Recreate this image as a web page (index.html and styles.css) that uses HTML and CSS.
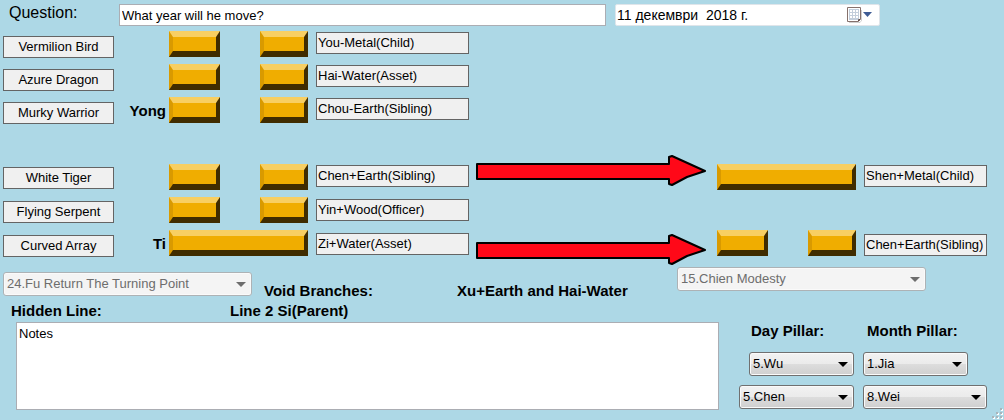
FILE: index.html
```html
<!DOCTYPE html>
<html lang="en">
<head>
<meta charset="utf-8">
<meta name="viewport" content="width=device-width, initial-scale=1">
<title>Hexagram Reading</title>
<link rel="stylesheet" href="styles.css">
</head>
<body>
<form class="window">
  <header class="header">
    <label class="question-label" for="question">Question:</label>
    <input class="question" id="question" type="text" value="What year will he move?">
    <div class="date">
      <input class="date-text" type="text" aria-label="Date" value="11 декември  2018 г.">
      <button class="date-button" type="button" aria-label="Open calendar">
        <svg width="26" height="18" viewBox="0 0 26 18" aria-hidden="true">
          <path d="M2 16.500h11l1.500-2V4" fill="none" stroke="#000" stroke-opacity=".18"/>
          <path d="M.5 1.500h13v12l-2 2H.5z" fill="#fff" stroke="#86716c"/>
          <path d="M2 3h10v10h-1v1H2z" fill="#c3cedb"/>
          <path d="M3 4h2v2H3zM6 4h2v2H6zM9 4h2v2H9zM3 7h2v2H3zM6 7h2v2H6zM9 7h2v2H9zM3 10h2v2H3zM6 10h2v2H6zM9 10h2v2H9z" fill="#fff"/>
          <path d="M11.500 15v-1.500H13" fill="none" stroke="#5f4c48"/>
          <path d="M16 6h9l-4.500 5z" fill="#3e5b94"/>
        </svg>
      </button>
    </div>
  </header>

  <main class="hexagrams">
    <div class="stack names">
      <span class="tag">Vermilion Bird</span>
      <span class="tag">Azure Dragon</span>
      <span class="tag">Murky Warrior</span>
    </div>
    <div class="stack roles">
      <strong></strong>
      <strong></strong>
      <strong>Yong</strong>
    </div>
    <div class="stack lines">
      <div class="line"><i class="bar"></i><i class="bar bar-short"></i></div>
      <div class="line"><i class="bar"></i><i class="bar bar-short"></i></div>
      <div class="line"><i class="bar"></i><i class="bar bar-short"></i></div>
    </div>
    <div class="stack branches">
      <span class="tag">You-Metal(Child)</span>
      <span class="tag">Hai-Water(Asset)</span>
      <span class="tag">Chou-Earth(Sibling)</span>
    </div>

    <div class="stack names lower">
      <span class="tag">White Tiger</span>
      <span class="tag">Flying Serpent</span>
      <span class="tag">Curved Array</span>
    </div>
    <div class="stack roles lower">
      <strong></strong>
      <strong></strong>
      <strong>Ti</strong>
    </div>
    <div class="stack lines lower">
      <div class="line"><i class="bar"></i><i class="bar bar-short"></i></div>
      <div class="line"><i class="bar"></i><i class="bar bar-short"></i></div>
      <div class="line"><i class="bar bar-full"></i></div>
    </div>
    <div class="stack branches lower">
      <span class="tag">Chen+Earth(Sibling)</span>
      <span class="tag">Yin+Wood(Officer)</span>
      <span class="tag">Zi+Water(Asset)</span>
    </div>
    <div class="arrows lower">
      <svg class="arrow" viewBox="0 0 230 31" preserveAspectRatio="none" role="img" aria-label="changes to">
        <path d="M1 9 193 9 193 2 196 1 229 16 211 22 196 30 193 29 193 24 1 24z" class="arrow-shape"/>
      </svg>
      <svg class="arrow" viewBox="0 0 230 31" preserveAspectRatio="none" role="img" aria-label="changes to">
        <path d="M1 9 193 9 193 2 196 1 229 16 211 22 196 30 193 29 193 24 1 24z" class="arrow-shape"/>
      </svg>
    </div>
    <div class="stack lines changed lower">
      <div class="line"><i class="bar bar-full"></i></div>
      <div class="line"></div>
      <div class="line"><i class="bar"></i><i class="bar bar-short"></i></div>
    </div>
    <div class="stack branches results lower">
      <span class="tag">Shen+Metal(Child)</span>
      <span class="tag">Chen+Earth(Sibling)</span>
    </div>
  </main>

  <section class="summary">
    <span class="select select-wide select-primary">
      <select aria-label="Hexagram" disabled><option>24.Fu Return The Turning Point</option></select>
    </span>
    <strong class="void-label">Void Branches:</strong>
    <strong class="void-value">Xu+Earth and Hai-Water</strong>
    <span class="select select-wide">
      <select aria-label="Changed hexagram" disabled><option>15.Chien Modesty</option></select>
    </span>
  </section>

  <section class="details">
    <div class="notes-panel">
      <div class="hidden-line">
        <strong class="hidden-label">Hidden Line:</strong>
        <strong>Line 2 Si(Parent)</strong>
      </div>
      <textarea class="notes" aria-label="Notes">Notes</textarea>
    </div>
    <div class="pillars">
      <label class="pillar-label day-label" for="day-stem">Day Pillar:</label>
      <label class="pillar-label month-label" for="month-stem">Month Pillar:</label>
      <span class="select select-stem select-day">
        <select id="day-stem"><option>5.Wu</option></select>
      </span>
      <span class="select select-stem">
        <select id="month-stem"><option>1.Jia</option></select>
      </span>
      <span class="select">
        <select aria-label="Day branch"><option>5.Chen</option></select>
      </span>
      <span class="select">
        <select aria-label="Month branch"><option>8.Wei</option></select>
      </span>
    </div>
  </section>

  <svg class="grip" width="12" height="12" viewBox="0 0 12 12" aria-hidden="true">
    <path d="M9 1h2v2H9zM5 5h2v2H5zM9 5h2v2H9zM1 9h2v2H1zM5 9h2v2H5zM9 9h2v2H9z" fill="#fff"/>
    <path d="M8 0h2v2H8zM4 4h2v2H4zM8 4h2v2H8zM0 8h2v2H0zM4 8h2v2H4zM8 8h2v2H8z" fill="#a9b4ba"/>
  </svg>
</form>
</body>
</html>
```
FILE: styles.css
```css
* {
  box-sizing: border-box;
}

body {
  margin: 0;
  background: #add8e6;
  color: #000;
  font: 13px/18px "Liberation Sans", Arial, sans-serif;
}

input,
select,
textarea {
  font: inherit;
  color: inherit;
}

strong {
  font-size: 15px;
  font-weight: bold;
}

.window {
  position: relative;
  min-height: 100vh;
  padding: 4px 17px 10px 3px;
}

/* Header */

.header {
  display: flex;
  align-items: flex-start;
  padding-right: 107px;
}

.question-label {
  width: 116px;
  padding-left: 6px;
  font-size: 16px;
}

.question {
  flex: 1;
  min-width: 0;
  height: 22px;
  padding: 0 2px;
  border: 1px solid #abadb3;
  background: #fff;
}

.date {
  display: flex;
  width: 265px;
  height: 22px;
  margin-left: 9px;
  border: 1px solid #dfe5ea;
  border-radius: 2px;
  background: #fff;
}

.date-text {
  flex: 1;
  min-width: 0;
  padding: 0 1px;
  border: 0;
  background: none;
  font-size: 14px;
}

.date-button {
  display: flex;
  padding: 1px 6px 0 0;
  border: 0;
  background: none;
}

/* Hexagram lines */

.hexagrams {
  display: grid;
  grid-template-columns: 111px 55px 139px 161px minmax(80px, 1fr) 150px 131px;
  row-gap: 31px;
  margin-top: 5px;
}

.stack {
  display: flex;
  flex-direction: column;
}

.names {
  grid-column: 1;
  gap: 11px;
  padding-top: 5px;
}

.names.lower {
  gap: 12px;
  padding-top: 12px;
}

.roles {
  grid-column: 2;
  gap: 7px;
  padding-right: 3px;
  text-align: right;
}

.roles strong {
  height: 26px;
  line-height: 28px;
}

.lines {
  grid-column: 3;
  gap: 7px;
}

.roles.lower,
.lines.lower {
  padding-top: 9px;
}

.branches {
  grid-column: 4;
  gap: 11px;
  padding: 1px 0 0 8px;
}

.branches.lower {
  gap: 12px;
  padding-top: 10px;
}

.arrows {
  grid-column: 5;
  display: flex;
  flex-direction: column;
  gap: 48px;
  padding-left: 7px;
}

.changed {
  grid-column: 6;
  padding-left: 11px;
}

.branches.results {
  grid-column: 7;
  gap: 47px;
}

.tag {
  height: 22px;
  border: 1px solid #646464;
  background: #f0f0f0;
  line-height: 20px;
  white-space: nowrap;
}

.names .tag {
  text-align: center;
}

.branches .tag {
  padding-left: 1px;
}

.branches:not(.results) .tag {
  width: 153px;
}

.line {
  display: flex;
  justify-content: space-between;
  height: 26px;
}

.bar {
  width: 51px;
  border-style: solid;
  border-width: 6px 4px 6px 4px;
  border-color: #f8cf62 #402c00 #402c00 #d99a00;
  background: #f0ad00;
}

.bar-short {
  width: 48px;
}

.bar-full {
  width: 100%;
}

.arrow {
  display: block;
  width: 100%;
  height: 31px;
}

.arrow-shape {
  fill: #ff0818;
  stroke: #000;
  stroke-width: 2;
  stroke-linejoin: round;
}

/* Drop-downs */

.select {
  position: relative;
  display: block;
}

.select::after {
  content: "";
  position: absolute;
  top: 10px;
  right: 6px;
  width: 10px;
  height: 5px;
  background: #000;
  clip-path: polygon(0 0, 100% 0, 50% 100%);
  pointer-events: none;
}

.select select {
  display: block;
  width: 100%;
  height: 24px;
  padding: 0 18px 0 3px;
  border: 1px solid #707070;
  border-radius: 3px;
  background: linear-gradient(#f2f2f2, #ebebeb 50%, #dddddd 50%, #cfcfcf);
  box-shadow: inset 0 0 0 1px #fafafa;
  appearance: none;
}

.select select:disabled {
  border-color: #adb2b5;
  background: #f4f4f4;
  color: #6d6d6d;
  opacity: 1;
}

.select-wide {
  width: 249px;
}

.select-wide::after {
  background: #6d6d6d;
}

/* Summary row */

.summary {
  display: flex;
  align-items: flex-start;
  padding-right: 61px;
  margin-top: 2px;
  white-space: nowrap;
}

.select-primary {
  margin-top: 5px;
}

.void-label {
  width: 193px;
  margin: 15px 0 0 12px;
}

.void-value {
  flex: 1;
  margin-top: 15px;
}

/* Notes and pillars */

.details {
  display: flex;
  gap: 20px;
  padding-left: 13px;
  margin-top: 2px;
}

.notes-panel {
  flex: 1;
  min-width: 0;
}

.hidden-line {
  display: flex;
  margin-left: -5px;
}

.hidden-label {
  width: 219px;
}

.notes {
  display: block;
  width: 100%;
  height: 88px;
  padding: 2px;
  margin: 2px 0 0;
  border: 1px solid #abadb3;
  background: #fff;
  resize: none;
}

.pillars {
  display: grid;
  grid-template-columns: 115px 124px;
  column-gap: 9px;
  row-gap: 9px;
  align-content: start;
  padding-top: 20px;
}

.pillar-label {
  font-size: 15px;
  font-weight: bold;
  margin-bottom: 3px;
}

.day-label {
  padding-left: 12px;
}

.month-label {
  padding-left: 4px;
}

.select-stem {
  width: 105px;
}

.select-day {
  justify-self: end;
}

.grip {
  position: absolute;
  right: 0;
  bottom: 0;
}
```
